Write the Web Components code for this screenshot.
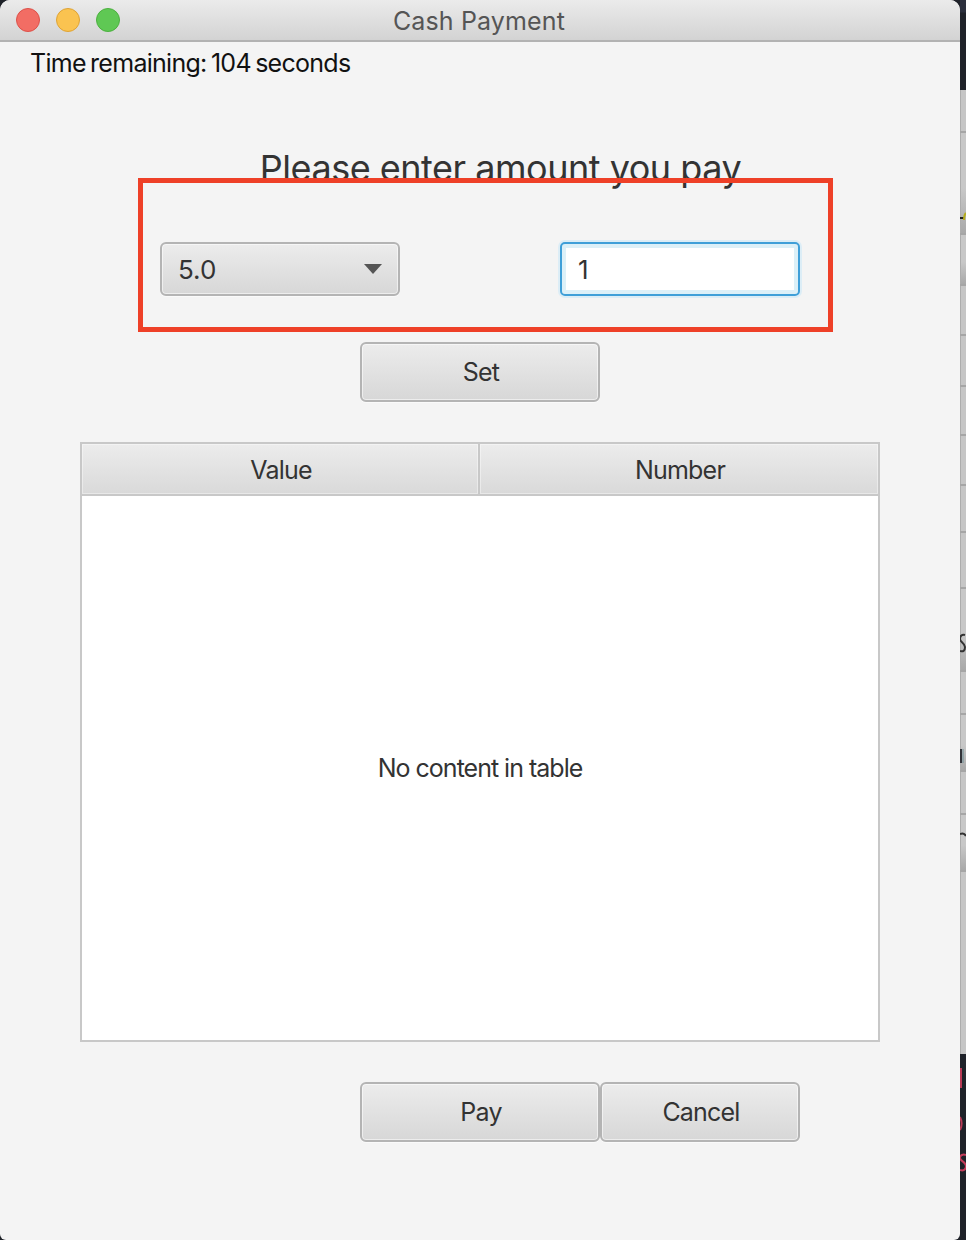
<!DOCTYPE html>
<html>
<head>
<meta charset="utf-8">
<title>Cash Payment</title>
<style>
html, body { margin: 0; padding: 0; height: 1240px; overflow: hidden; background: #1f2229; }
body { font-family: Inter, "Liberation Sans", sans-serif; }
</style>
</head>
<body>
<pay-desktop>
  <pay-window>
    <pay-titlebar slot="bar">Cash Payment</pay-titlebar>
    <pay-label>Time remaining: 104 seconds</pay-label>
    <pay-amount>Please enter amount you pay</pay-amount>
    <pay-table></pay-table>
    <pay-actions></pay-actions>
  </pay-window>
  <pay-strip></pay-strip>
</pay-desktop>

<script>
const BUTTON_FACE = `
  background: linear-gradient(#ececec, #d7d7d7);
  border: 2px solid #b4b4b4;
  border-radius: 6px;
  box-shadow: inset 0 0 0 1px rgba(255,255,255,.55), 0 1px 0 #fafafa;
  box-sizing: border-box;
`;

class pay_desktop extends HTMLElement {
    constructor() {
        super();
        this.attachShadow({ mode: 'open' });
        this.shadowRoot.innerHTML = `<style>
        :host { display: flex; width: 966px; height: 1240px; }
        </style><slot></slot>`;
    }
}

class pay_window extends HTMLElement {
    constructor() {
        super();
        this.attachShadow({ mode: 'open' });
        this.shadowRoot.innerHTML = `<style>
        :host {
            display: flex;
            flex-direction: column;
            width: 960px;
            height: 1240px;
            background: #f4f4f4;
            border-radius: 10px 10px 6px 6px;
            overflow: hidden;
            flex: none;
        }
        </style><slot name="bar"></slot><slot></slot>`;
    }
}

class pay_titlebar extends HTMLElement {
    constructor() {
        super();
        this.attachShadow({ mode: 'open' });
        this.shadowRoot.innerHTML = `<style>
        :host {
            display: flex;
            align-items: center;
            position: relative;
            height: 42px;
            box-sizing: border-box;
            padding: 0 0 0 16px;
            background: linear-gradient(#ebebeb, #d3d3d3);
            border-bottom: 2px solid #b2b2b2;
            flex: none;
        }
        .lights { display: flex; gap: 16px; }
        .lights span { width: 24px; height: 24px; box-sizing: border-box; border-radius: 50%; border: 1px solid; }
        .red { background: #f26d64; border-color: #dc5149 !important; }
        .yellow { background: #fac350; border-color: #dea336 !important; }
        .green { background: #5fc854; border-color: #4cb03f !important; }
        .name {
            position: absolute;
            left: 0; right: 0; top: 1px; bottom: 0;
            display: flex; align-items: center; justify-content: center;
            font-size: 25px;
            letter-spacing: 0.15px;
            color: #555;
            padding-right: 2px;
        }
        </style>
        <div class="name"><slot></slot></div>
        <div class="lights"><span class="red"></span><span class="yellow"></span><span class="green"></span></div>`;
    }
}

class pay_label extends HTMLElement {
    constructor() {
        super();
        this.attachShadow({ mode: 'open' });
        this.shadowRoot.innerHTML = `<style>
        :host {
            display: block;
            height: 42px;
            line-height: 42px;
            padding-left: 30px;
            font-size: 25px;
            letter-spacing: -0.72px;
            word-spacing: -2px;
            color: #111;
            flex: none;
        }
        </style><slot></slot>`;
    }
}

class pay_button extends HTMLElement {
    constructor() {
        super();
        this.attachShadow({ mode: 'open' });
        this.shadowRoot.innerHTML = `<style>
        :host {
            display: flex;
            align-items: center;
            justify-content: center;
            height: 60px;
            padding-left: 2px;
            font-size: 25px;
            letter-spacing: -0.8px;
            color: #333;
            flex: none;
            ${BUTTON_FACE}
        }
        </style><slot></slot>`;
    }
}

class pay_combo extends HTMLElement {
    constructor() {
        super();
        this.attachShadow({ mode: 'open' });
        this.shadowRoot.innerHTML = `<style>
        :host {
            display: flex;
            align-items: center;
            justify-content: space-between;
            width: 240px;
            height: 54px;
            padding: 0 15px 0 16px;
            font-size: 26px;
            color: #333;
            ${BUTTON_FACE}
        }
        svg { display: block; }
        </style><slot></slot>
        <svg width="20" height="12" viewBox="0 0 20 12"><path d="M1 1h18L10 11z" fill="#555"/></svg>`;
    }
}

class pay_field extends HTMLElement {
    constructor() {
        super();
        this.attachShadow({ mode: 'open' });
        this.shadowRoot.innerHTML = `<style>
        :host {
            display: flex;
            align-items: center;
            width: 240px;
            height: 54px;
            box-sizing: border-box;
            padding-left: 16px;
            font-size: 26px;
            color: #333;
            background: #fff;
            border: 2px solid #3f9fd8;
            border-radius: 5px;
            box-shadow: inset 0 0 0 4px #dcf0f8, 0 0 0 2px #dcedf6;
        }
        </style><slot></slot>`;
    }
}

class pay_amount extends HTMLElement {
    constructor() {
        super();
        this.attachShadow({ mode: 'open' });
        this.shadowRoot.innerHTML = `<style>
        :host {
            display: flex;
            flex-direction: column;
            align-items: center;
            position: relative;
            flex: none;
            padding-top: 64px;
        }
        .title {
            height: 40px;
            line-height: 40px;
            padding-left: 41px;
            font-size: 36px;
            letter-spacing: -0.48px;
            color: #333;
        }
        .row {
            display: flex;
            justify-content: space-between;
            align-self: stretch;
            margin: 54px 160px 0 160px;
        }
        pay-button { width: 240px; margin-top: 46px; }
        /* hand drawn annotation on top of the screenshot */
        .mark {
            position: absolute;
            left: 138px;
            top: 94px;
            width: 695px;
            height: 154px;
            box-sizing: border-box;
            border: 5px solid #ee4027;
        }
        </style>
        <div class="title"><slot></slot></div>
        <div class="row"><pay-combo>5.0</pay-combo><pay-field>1</pay-field></div>
        <pay-button>Set</pay-button>
        <div class="mark"></div>`;
    }
}

class pay_table extends HTMLElement {
    constructor() {
        super();
        this.attachShadow({ mode: 'open' });
        this.shadowRoot.innerHTML = `<style>
        :host {
            display: flex;
            flex-direction: column;
            width: 800px;
            height: 600px;
            box-sizing: border-box;
            margin: 40px 0 0 80px;
            border: 2px solid #c8c8c8;
            background: #fff;
            flex: none;
            font-size: 25px;
            letter-spacing: -0.8px;
            color: #333;
        }
        .head {
            display: grid;
            grid-template-columns: 396px 1fr;
            height: 50px;
            flex: none;
            background: linear-gradient(#ececec, #d9d9d9);
            border-bottom: 2px solid #c8c8c8;
        }
        .head div {
            display: flex; align-items: center; justify-content: center;
            padding: 2px 0 0 2px;
            box-shadow: inset 0 0 0 1px rgba(255,255,255,.4);
        }
        .head div + div { border-left: 2px solid #c8c8c8; }
        .empty { flex: 1; display: flex; align-items: center; justify-content: center; letter-spacing: -1px; padding-bottom: 1px; }
        </style>
        <div class="head"><div>Value</div><div>Number</div></div>
        <div class="empty">No content in table</div>`;
    }
}

class pay_actions extends HTMLElement {
    constructor() {
        super();
        this.attachShadow({ mode: 'open' });
        this.shadowRoot.innerHTML = `<style>
        :host { display: flex; padding: 40px 0 0 360px; flex: none; }
        .pay { width: 240px; }
        .cancel { width: 200px; }
        </style>
        <pay-button class="pay">Pay</pay-button><pay-button class="cancel">Cancel</pay-button>`;
    }
}

// sliver of whatever window lies behind the dialog
class pay_strip extends HTMLElement {
    constructor() {
        super();
        this.attachShadow({ mode: 'open' });
        const stops = [[133, 0], [235, 1], [286, 1], [336, 0], [387, 0], [436, 0], [486, 0], [533, 0], [589, 0], [672, 1], [715, 0], [772, 1], [815, 0], [872, 1]];
        let rows = '';
        let last = 90;
        stops.forEach(([y, dark]) => {
            rows += `<div class="row${dark ? ' dark' : ''}" style="height:${y - last}px"></div>`;
            last = y;
        });
        rows += `<div class="row last" style="height:${1054 - last}px"></div>`;
        this.shadowRoot.innerHTML = `<style>
        :host {
            display: flex;
            flex-direction: column;
            position: relative;
            width: 6px;
            height: 1240px;
            flex: none;
            background: #1f2229;
        }
        .top { height: 90px; flex: none; background: linear-gradient(#2b2f3c 0, #2b2f3c 12px, #1f2229 13px); }
        .row {
            flex: none;
            box-sizing: border-box;
            background: #c6c6c6;
            border-bottom: 2px solid #a6a6a6;
            box-shadow: inset 1px 0 0 #adadad;
        }
        .dark { background: linear-gradient(#c8c8c8 55%, #a9a9a9); }
        .last { border-bottom: 0; }
        svg { position: absolute; left: 0; top: 0; }
        </style>
        <div class="top"></div>${rows}
        <svg width="6" height="1240" viewBox="0 0 6 1240" fill="none">
          <path d="M0 218h4" stroke="#222" stroke-width="2"/>
          <path d="M4 220c0-4 1-6 2-7" stroke="#b5ad1e" stroke-width="2"/>
          <path d="M5 635c-3-1-5 1-5 4s5 4 5 8-2 5-5 4" stroke="#333" stroke-width="2"/>
          <path d="M1 749v14" stroke="#33343a" stroke-width="2"/>
          <path d="M3 749v14" stroke="#6f8f96" stroke-width="1"/>
          <path d="M0 834c3-1 5 0 6 2" stroke="#333" stroke-width="2"/>
          <path d="M1 1068v20" stroke="#b83a55" stroke-width="2"/>
          <path d="M0 1117c2 4 2 9 0 13" stroke="#b83a55" stroke-width="2"/>
          <path d="M6 1155c-3-1-6 0-6 3s6 4 6 8-3 5-6 4" stroke="#c43c5a" stroke-width="2"/>
        </svg>`;
    }
}

customElements.define('pay-desktop', pay_desktop);
customElements.define('pay-window', pay_window);
customElements.define('pay-titlebar', pay_titlebar);
customElements.define('pay-label', pay_label);
customElements.define('pay-button', pay_button);
customElements.define('pay-combo', pay_combo);
customElements.define('pay-field', pay_field);
customElements.define('pay-amount', pay_amount);
customElements.define('pay-table', pay_table);
customElements.define('pay-actions', pay_actions);
customElements.define('pay-strip', pay_strip);
</script>
</body>
</html>
